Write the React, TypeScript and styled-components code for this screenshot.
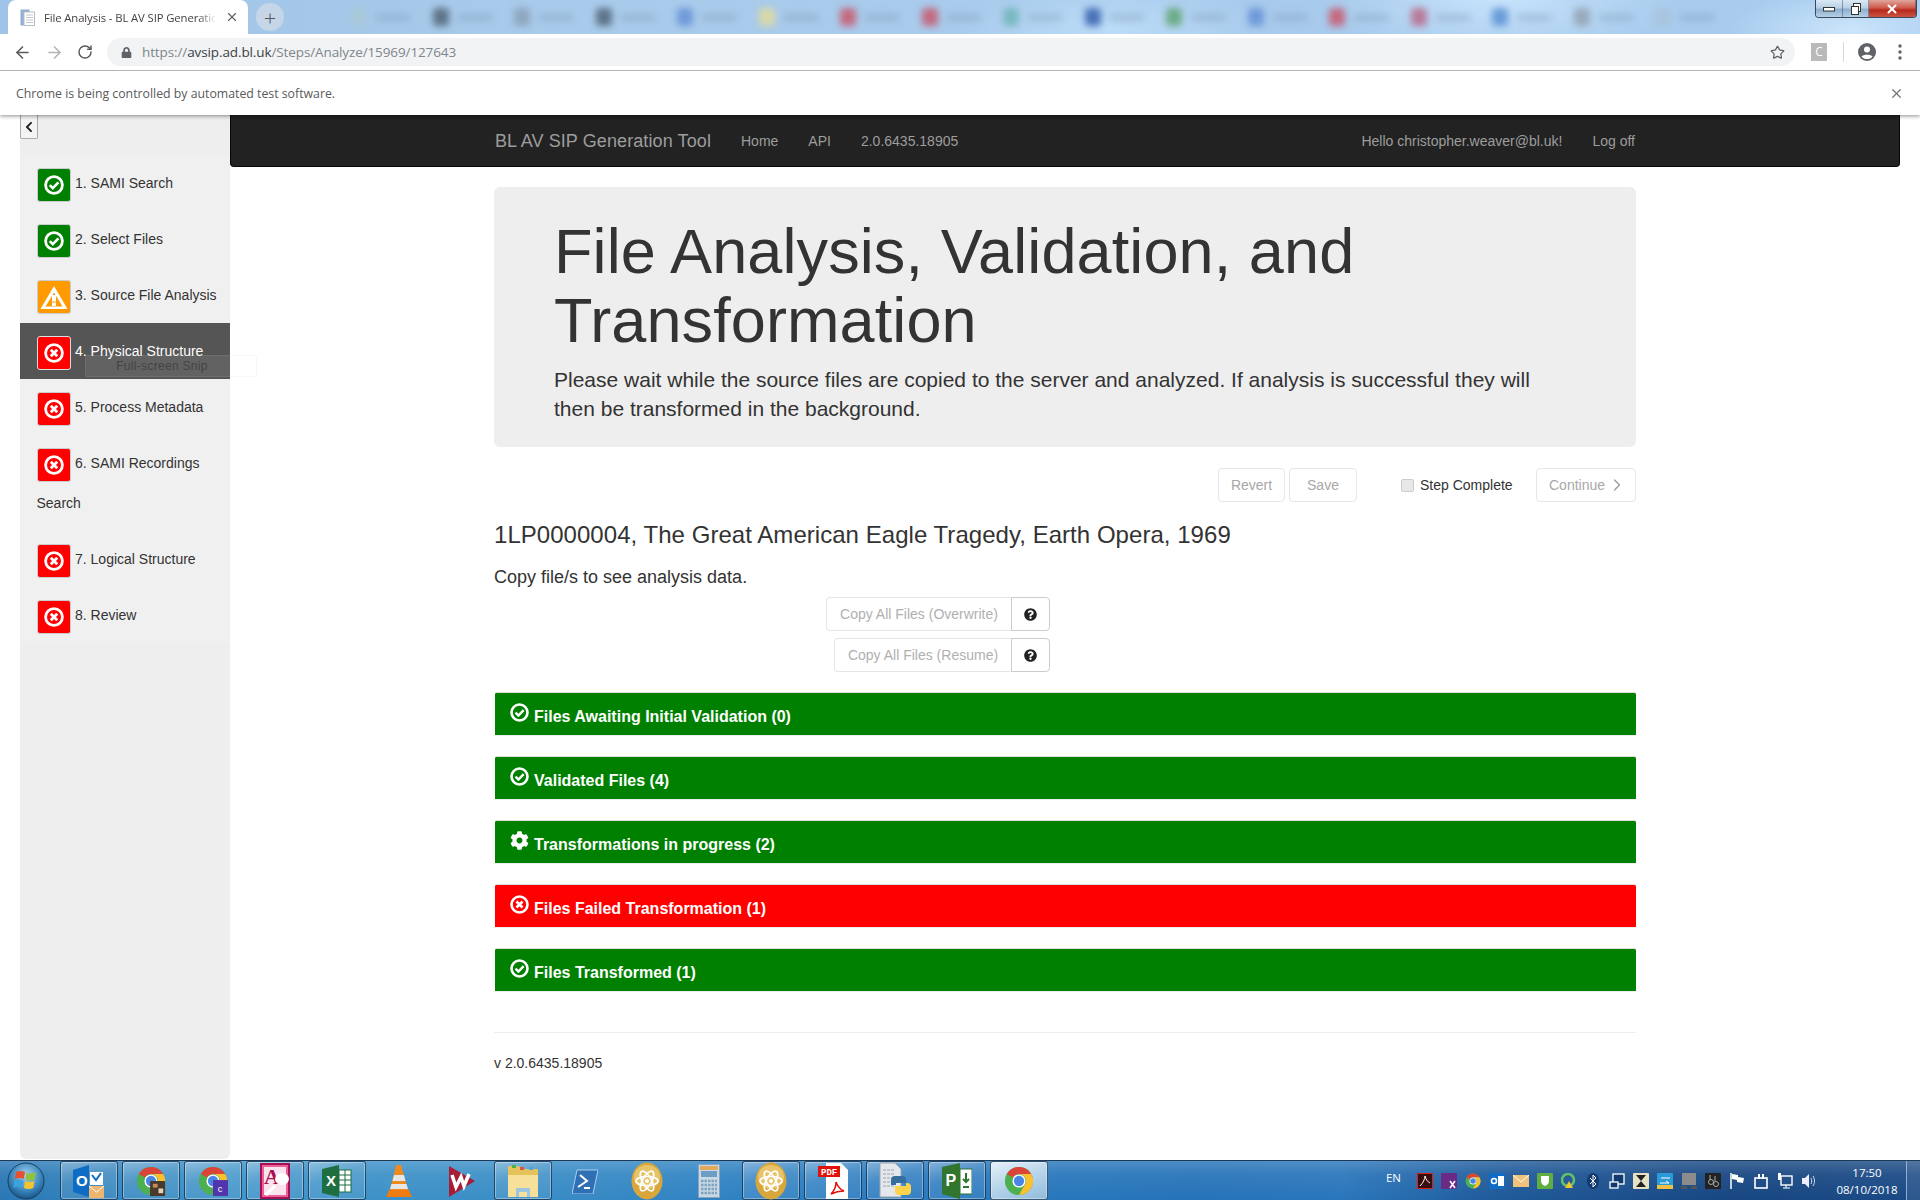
import React from 'react';
import styled, { createGlobalStyle } from 'styled-components';
import { ArrowLeft, ArrowRight, RotateCw, Star, X, ChevronRight } from 'lucide-react';
import { FaChevronLeft, FaCog, FaLock, FaQuestionCircle } from 'react-icons/fa';

const GlobalStyle = createGlobalStyle`
  html, body { margin: 0; padding: 0; background: #fff; }
  body {
    font-family: "Liberation Sans", Arial, sans-serif;
    font-size: 14px;
    color: #333;
    overflow: hidden;
  }
  * { box-sizing: border-box; }
`;

const Screen = styled.div`
  width: 1920px;
  height: 1200px;
  display: flex;
  flex-direction: column;
  overflow: hidden;
`;

/* ---------- browser chrome ---------- */

const ChromeFrame = styled.header`
  height: 115px;
  flex-shrink: 0;
  position: relative;
  z-index: 2;
  background: #fff;
  box-shadow: 0 1px 4px rgba(0, 0, 0, 0.45);
  font-family: "Open Sans", "Noto Sans", sans-serif;
`;

const TabStrip = styled.div`
  height: 34px;
  padding-left: 8px;
  display: flex;
  background:
    radial-gradient(ellipse 180px 60px at 1500px 0, #c6e2fb 0, rgba(198, 226, 251, 0) 100%),
    radial-gradient(ellipse 160px 50px at 1110px 30px, #bcdcf8 0, rgba(188, 220, 248, 0) 100%),
    radial-gradient(ellipse 120px 40px at 1850px 30px, #cbe5fb 0, rgba(203, 229, 251, 0) 100%),
    linear-gradient(90deg, #9fc4e8 0, #a9cbeb 30%, #a8caec 70%, #a9cdef 100%);
`;

const ActiveTab = styled.div`
  width: 240px;
  height: 34px;
  background: #fff;
  border-radius: 8px 8px 0 0;
  display: flex;
  align-items: center;
  padding: 0 8px 0 12px;
  color: #45413f;
  flex-shrink: 0;
`;

const TabTitle = styled.span`
  margin: 0 9px;
  width: 172px;
  white-space: nowrap;
  overflow: hidden;
  font-size: 11.3px;
  letter-spacing: -0.1px;
  mask-image: linear-gradient(90deg, #000 90%, transparent 100%);
`;

const NewTabButton = styled.div`
  width: 28px;
  height: 28px;
  margin: 3px 0 0 8px;
  border-radius: 50%;
  background: #c4d6e8;
  color: #555;
  display: flex;
  align-items: center;
  justify-content: center;
  font-size: 22px;
  font-weight: 300;
  flex-shrink: 0;
`;

const BlurredTabs = styled.div`
  display: flex;
  padding-left: 59px;
  height: 34px;
  filter: blur(3.5px);
  flex: 1;
  min-width: 0;
`;

const BlurredTab = styled.div`
  width: 81.5px;
  flex-shrink: 0;
  display: flex;
  align-items: center;
  padding-left: 8px;
  gap: 9px;
`;

const BlurredIcon = styled.span<{ $color: string }>`
  width: 16px;
  height: 18px;
  border-radius: 4px;
  background: ${(p) => p.$color};
`;

const BlurredLabel = styled.span`
  width: 34px;
  height: 7px;
  background: rgba(120, 145, 175, 0.35);
`;

const WindowControls = styled.div`
  position: absolute;
  top: 0;
  right: 3px;
  width: 102px;
  height: 18px;
  display: flex;
  border: 1px solid #3a4a5c;
  border-top: none;
  border-radius: 0 0 4px 4px;
  overflow: hidden;
`;

const WindowButton = styled.div<{ $width: number; $close?: boolean }>`
  width: ${(p) => p.$width}px;
  display: flex;
  align-items: center;
  justify-content: center;
  border-right: 1px solid rgba(60, 80, 100, 0.5);
  background: ${(p) =>
    p.$close
      ? 'linear-gradient(180deg, #e0a59b 0, #cf5a4c 45%, #b8291b 60%, #cb5444 100%)'
      : 'linear-gradient(180deg, #dce9f5 0, #b9d0e6 45%, #8fb0cf 55%, #b5d0e8 100%)'};
`;

const Toolbar = styled.div`
  height: 37px;
  display: flex;
  align-items: flex-start;
  padding-top: 4px;
  border-bottom: 1px solid #b4b4b4;
  background: #fff;
`;

const NavIconButton = styled.span<{ $disabled?: boolean; $left: number }>`
  width: 20px;
  height: 28px;
  margin-left: ${(p) => p.$left}px;
  display: flex;
  align-items: center;
  justify-content: center;
  color: ${(p) => (p.$disabled ? '#b4b4b4' : '#5a5a5a')};
  flex-shrink: 0;
`;

const Omnibox = styled.div`
  width: 1688px;
  height: 28px;
  margin-left: 12px;
  border-radius: 14px;
  background: #f1f3f4;
  display: flex;
  align-items: center;
  padding: 0 10px 0 14px;
  font-size: 13.5px;
  color: #80868b;
  flex-shrink: 0;
`;

const Url = styled.span`
  margin-left: 10px;
  flex: 1;
  letter-spacing: -0.11px;
`;

const UrlHost = styled.span`
  color: #3b3f44;
`;

const ExtensionBadge = styled.span`
  width: 16px;
  height: 18px;
  margin: 5px 0 0 16px;
  background: #b9b9b9;
  color: #fff;
  font-size: 12px;
  line-height: 18px;
  text-align: center;
`;

const ToolbarDivider = styled.span`
  width: 1px;
  height: 20px;
  margin: 4px 0 0 16px;
  background: #d8d8d8;
`;

const ToolbarIcon = styled.span<{ $left: number }>`
  margin: 4px 0 0 ${(p) => p.$left}px;
  display: flex;
`;

const InfoBar = styled.div`
  height: 44px;
  display: flex;
  align-items: center;
  justify-content: space-between;
  padding: 0 16px;
  font-size: 12.3px;
  color: #5a5a5a;
`;

/* ---------- page ---------- */

const Page = styled.div`
  height: 1045px;
  display: flex;
  padding-left: 20px;
`;

const Sidebar = styled.aside`
  width: 210px;
  height: 1044px;
  background: #eee;
  border-radius: 0 0 6px 6px;
  flex-shrink: 0;
  position: relative;
`;

const SidebarHead = styled.div`
  height: 40px;
`;

const CollapseButton = styled.button`
  width: 18px;
  height: 24px;
  padding: 0;
  background: #f4f4f4;
  border: 1px solid #aaa;
  border-top: none;
  border-radius: 0 0 2px 2px;
  display: flex;
  align-items: center;
  justify-content: center;
  color: #222;
`;

const StepList = styled.nav`
  background: #f0f0f0;
`;

const StepItem = styled.div<{ $active?: boolean }>`
  padding: 8px 12px 8px 16.5px;
  line-height: 40px;
  font-size: 14px;
  color: ${(p) => (p.$active ? '#fff' : '#333')};
  background: ${(p) => (p.$active ? '#555' : 'transparent')};
`;

const StepBadge = styled.span<{ $status: Status; $active?: boolean }>`
  display: inline-flex;
  align-items: center;
  justify-content: center;
  width: 34px;
  height: 34px;
  margin: 2px 4.5px 0 0;
  border-radius: 3px;
  border: 1px solid ${(p) => (p.$active ? '#ddd' : '#ccc')};
  vertical-align: middle;
  background: ${(p) => statusColors[p.$status]};
`;

const SnipGhost = styled.div`
  position: absolute;
  left: 65px;
  top: 240px;
  width: 172px;
  height: 22px;
  background: rgba(255, 255, 255, 0.08);
  border: 1px solid rgba(200, 200, 200, 0.12);
  border-radius: 2px;
  font-size: 12px;
  line-height: 20px;
  color: #444;
  text-align: center;
  padding-right: 18px;
  letter-spacing: 0.3px;
`;

const Main = styled.main`
  width: 1670px;
  flex-shrink: 0;
  display: flex;
  flex-direction: column;
`;

const NavBar = styled.div`
  height: 52px;
  background: #222;
  border: 1px solid #080808;
  border-top: none;
  border-radius: 0 0 4px 4px;
  flex-shrink: 0;
`;

const NavContainer = styled.div`
  width: 1170px;
  height: 50px;
  margin: 0 auto;
  padding: 2px 0 0 15px;
  display: flex;
  align-items: center;
  color: #9d9d9d;
`;

const Brand = styled.span`
  font-size: 18px;
  letter-spacing: 0.1px;
  margin-right: 30px;
`;

const NavLink = styled.span<{ $gap?: number }>`
  margin-right: ${(p) => p.$gap ?? 30}px;
  font-size: 14px;
  white-space: nowrap;
`;

const NavRight = styled.div`
  margin-left: auto;
  padding-right: 15px;
  display: flex;
`;

const Container = styled.div`
  width: 1142px;
  margin-left: 264px;
`;

const Jumbotron = styled.section`
  margin-top: 20px;
  height: 260px;
  background: #eee;
  border-radius: 6px;
  padding: 30px 60px 0;
`;

const Title = styled.h1`
  margin: 0 0 10px;
  font-size: 63px;
  line-height: 69px;
  font-weight: 400;
  letter-spacing: 0.1px;
  color: #333;
`;

const Lead = styled.p`
  margin: 0;
  font-size: 21px;
  line-height: 29.4px;
  font-weight: 300;
  color: #333;
`;

const ActionRow = styled.div`
  margin-top: 21px;
  height: 34px;
  display: flex;
  justify-content: flex-end;
  align-items: center;
`;

const GhostButton = styled.button<{ $width: number; $left?: number }>`
  width: ${(p) => p.$width}px;
  height: 34px;
  margin-left: ${(p) => p.$left ?? 0}px;
  padding: 0;
  background: #fff;
  border: 1px solid #e6e6e6;
  border-radius: 4px;
  font-family: inherit;
  font-size: 14px;
  color: #a8a8a8;
  display: flex;
  align-items: center;
  justify-content: center;
`;

const ContinueButton = styled(GhostButton)`
  justify-content: flex-start;
  padding-left: 12px;
  gap: 2px;
`;

const StepCheck = styled.label`
  margin-left: 44px;
  width: 135px;
  display: flex;
  align-items: center;
  gap: 6px;
  color: #333;
`;

const CheckBox = styled.span`
  width: 13px;
  height: 13px;
  border: 1px solid #ccc;
  border-radius: 2px;
  background: #e8e8e8;
`;

const RecordTitle = styled.h3`
  margin: 20px 0 0;
  font-size: 24px;
  line-height: 26px;
  font-weight: 400;
  letter-spacing: 0.04px;
  color: #333;
`;

const CopyHint = styled.p`
  margin: 16px 0 0;
  font-size: 18px;
  line-height: 26px;
  color: #333;
`;

const CopyColumn = styled.div`
  width: 556px;
  margin-top: 7px;
  display: flex;
  flex-direction: column;
  align-items: flex-end;
  gap: 7px;
`;

const CopyGroup = styled.div`
  display: flex;
  height: 34px;
`;

const CopyButton = styled.button<{ $width: number }>`
  width: ${(p) => p.$width}px;
  padding: 0;
  background: #fff;
  border: 1px solid #e6e6e6;
  border-right: none;
  border-radius: 4px 0 0 4px;
  font-family: inherit;
  font-size: 14px;
  color: #b0b0b0;
`;

const HelpButton = styled.button`
  width: 39px;
  padding: 0;
  background: #fff;
  border: 1px solid #ccc;
  border-radius: 0 4px 4px 0;
  color: #222;
  display: flex;
  align-items: center;
  justify-content: center;
`;

const PanelList = styled.div`
  margin: 20px 0 0 1px;
  display: flex;
  flex-direction: column;
  gap: 21px;
`;

const Panel = styled.div<{ $tone: 'ok' | 'bad' }>`
  height: 43px;
  padding: 0 15px;
  display: flex;
  align-items: center;
  gap: 5px;
  background: ${(p) => (p.$tone === 'ok' ? '#008000' : '#f00')};
  border-top: 1px solid #ddd;
  border-radius: 2px 2px 0 0;
  box-shadow: 0 1px 1px rgba(0, 0, 0, 0.08);
  color: #fff;
  font-size: 16px;
  font-weight: 700;
`;

const PanelGlyph = styled.span`
  display: flex;
  margin-top: -3px;
`;

const PanelLabel = styled.span`
  margin-top: 5px;
`;

const Rule = styled.hr`
  margin: 41px 0 0;
  border: none;
  border-top: 1px solid #eee;
`;

const Footer = styled.footer`
  margin-top: 20px;
  font-size: 14px;
  line-height: 20px;
  color: #333;
`;

/* ---------- taskbar ---------- */

const Taskbar = styled.footer`
  height: 40px;
  flex-shrink: 0;
  position: relative;
  display: flex;
  border-top: 1px solid #1c3a56;
  background:
    linear-gradient(180deg, rgba(255, 255, 255, 0.18) 0, rgba(255, 255, 255, 0.06) 35%, rgba(0, 0, 0, 0) 100%),
    linear-gradient(90deg, #2a77b4 0, #3f94c9 12%, #3b8fc6 25%, #2a7bc0 45%, #2673b8 62%, #2a76bb 70%, #1f5a9a 78%, #174681 90%, #1a4a85 100%);
  color: #fff;
  font-family: "Open Sans", sans-serif;
`;

const StartOrb = styled.div`
  width: 60px;
  display: flex;
  align-items: center;
  padding-left: 7px;
  flex-shrink: 0;
`;

const TaskSlots = styled.div`
  display: flex;
  gap: 4px;
`;

const TaskSlot = styled.div<{ $kind: 'idle' | 'open' | 'active' }>`
  width: 58px;
  height: 39px;
  display: flex;
  align-items: center;
  justify-content: center;
  border-radius: 3px;
  border: ${(p) => (p.$kind === 'idle' ? '1px solid transparent' : '1px solid rgba(12, 40, 70, 0.75)')};
  box-shadow: ${(p) => (p.$kind === 'idle' ? 'none' : 'inset 0 0 0 1px rgba(255, 255, 255, 0.35)')};
  background: ${(p) =>
    p.$kind === 'active'
      ? 'linear-gradient(160deg, #e6f1fa 0, #b6d4ea 50%, #8fbbdc 100%)'
      : p.$kind === 'open'
        ? 'linear-gradient(160deg, rgba(255,255,255,.3) 0, rgba(255,255,255,.1) 40%, rgba(255,255,255,.06) 100%)'
        : 'transparent'};
`;

const Tray = styled.div`
  margin-left: auto;
  display: flex;
  align-items: center;
  padding-right: 14px;
`;

const TrayLang = styled.span`
  font-size: 11.5px;
  margin-right: 12px;
  margin-top: -7px;
`;

const TrayIcons = styled.div`
  display: flex;
  align-items: center;
`;

const TraySlot = styled.span`
  width: 24px;
  display: flex;
  justify-content: center;
`;

const Clock = styled.div`
  width: 78px;
  margin-left: 7px;
  text-align: center;
  font-size: 11.5px;
  line-height: 17px;
`;

const ShowDesktop = styled.div`
  position: absolute;
  right: 0;
  top: 0;
  bottom: 0;
  width: 14px;
  border-left: 1px solid rgba(180, 210, 235, 0.7);
  background: rgba(255, 255, 255, 0.08);
`;

/* ---------- drawings ---------- */

type Status = 'ok' | 'warn' | 'bad';

const statusColors: Record<Status, string> = {
  ok: '#008000',
  warn: '#ff9b00',
  bad: '#f00',
};

const OkCircle = ({ size = 20 }: { size?: number }) => (
  <svg width={size} height={size} viewBox="0 0 20 20">
    <circle cx="10" cy="10" r="8.4" fill="none" stroke="#fff" strokeWidth="2.8" />
    <path d="M5.8 10.2l3 3 5.6-5.8" fill="none" stroke="#fff" strokeWidth="2.6" />
  </svg>
);

const BadCircle = ({ size = 20 }: { size?: number }) => (
  <svg width={size} height={size} viewBox="0 0 20 20">
    <circle cx="10" cy="10" r="8.4" fill="none" stroke="#fff" strokeWidth="2.8" />
    <path d="M6.8 6.8l6.4 6.4M13.2 6.8l-6.4 6.4" fill="none" stroke="#fff" strokeWidth="2.8" />
  </svg>
);

const WarnTriangle = () => (
  <svg width="28" height="25" viewBox="0 0 28 25">
    <path d="M14 1L27.5 24H.5z" fill="#fff" />
    <path d="M14 7.5L22.5 21.5H5.5z" fill="#ff9b00" />
    <rect x="12" y="10" width="4" height="6.5" fill="#fff" />
    <rect x="12" y="17.5" width="4" height="3.5" fill="#fff" />
  </svg>
);

const FileFavicon = () => (
  <svg width="15" height="17" viewBox="0 0 15 17">
    <rect x="0.5" y="0.5" width="9" height="16" fill="#8fb0d6" />
    <rect x="4" y="3" width="10.5" height="13.5" fill="#fff" stroke="#b7bcc4" />
    <path d="M6 6h7M6 8.5h7M6 11h7M6 13.5h7" stroke="#c2c6cc" />
  </svg>
);

const AccountIcon = () => (
  <svg width="20" height="20" viewBox="0 0 20 20">
    <circle cx="10" cy="10" r="9" fill="#5f6368" />
    <circle cx="10" cy="7.5" r="3" fill="#fff" />
    <path d="M4.5 14.5c1.5-2.4 9.5-2.4 11 0-1.4 1.8-3.2 2.6-5.5 2.6s-4.1-.8-5.5-2.6z" fill="#fff" />
  </svg>
);

const DotsIcon = () => (
  <svg width="6" height="20" viewBox="0 0 6 20">
    <circle cx="3" cy="4" r="1.7" fill="#5f6368" />
    <circle cx="3" cy="10" r="1.7" fill="#5f6368" />
    <circle cx="3" cy="16" r="1.7" fill="#5f6368" />
  </svg>
);

const WinOrb = () => (
  <svg width="38" height="38" viewBox="0 0 38 38">
    <defs>
      <radialGradient id="orb" cx="50%" cy="35%" r="70%">
        <stop offset="0" stopColor="#a8d4f0" />
        <stop offset="0.6" stopColor="#3a86bd" />
        <stop offset="1" stopColor="#134a78" />
      </radialGradient>
    </defs>
    <circle cx="19" cy="19" r="18" fill="url(#orb)" stroke="#1c3e5c" />
    <path d="M9 10c3-1.5 6-1.500 9 0l-1.200 7c-3-1.400-6-1.400-9 0z" fill="#e8512f" />
    <path d="M19.500 10.500c3 1.300 6 1.300 9.500-.2l-1.200 7.200c-3.300 1.400-6.300 1.400-9.300.1z" fill="#8fc33f" />
    <path d="M7.500 18.500c3-1.300 6-1.300 9 0l-1.200 7.200c-3-1.400-6-1.400-9 0z" fill="#3aa3dc" />
    <path d="M18 19c3 1.300 6 1.300 9.500-.1l-1.200 7.100c-3.300 1.500-6.300 1.400-9.300.1z" fill="#f4c430" />
  </svg>
);

const ChromeLogo = ({ size = 30, badge }: { size?: number; badge?: React.ReactNode }) => (
  <svg width={size} height={size} viewBox="0 0 32 32">
    <circle cx="16" cy="16" r="15" fill="#4caf50" />
    <path d="M16 1a15 15 0 0 1 13 7.500H16a7.500 7.500 0 0 0-6.500 3.750L3 8.500A15 15 0 0 1 16 1z" fill="#db4437" />
    <path d="M29 8.500A15 15 0 0 1 16 31l6.500-11.250A7.500 7.500 0 0 0 22.500 12.250 7.500 7.500 0 0 0 16 8.500z" fill="#fbc02d" />
    <circle cx="16" cy="16" r="7" fill="#fff" />
    <circle cx="16" cy="16" r="5.500" fill="#4a86e8" />
    {badge}
  </svg>
);

const AtomLogo = () => (
  <svg width="32" height="38" viewBox="0 0 32 38">
    <ellipse cx="16" cy="19" rx="15.500" ry="18.500" fill="#d9a63c" />
    <ellipse cx="16" cy="15" rx="13" ry="12" fill="#ecd27e" opacity="0.7" />
    <g fill="none" stroke="#fff" strokeWidth="1.700">
      <ellipse cx="16" cy="19" rx="11" ry="4.500" />
      <ellipse cx="16" cy="19" rx="11" ry="4.500" transform="rotate(60 16 19)" />
      <ellipse cx="16" cy="19" rx="11" ry="4.500" transform="rotate(120 16 19)" />
    </g>
    <circle cx="16" cy="19" r="2" fill="#fff" />
  </svg>
);

const taskIcons: { kind: 'idle' | 'open' | 'active'; icon: React.ReactNode }[] = [
  {
    kind: 'open',
    icon: (
      <svg width="34" height="34" viewBox="0 0 34 34">
        <path d="M1 6l16-5v32L1 28z" fill="#0f6cc4" />
        <text x="4" y="22" fontSize="15" fontWeight="700" fill="#fff" fontFamily="Liberation Sans">O</text>
        <rect x="18" y="8" width="13" height="13" fill="#fff" />
        <path d="M20 11l4 5 5-7" fill="none" stroke="#0f6cc4" strokeWidth="2" />
        <rect x="17" y="22" width="15" height="12" fill="#eeb56f" />
        <path d="M17 22l7.500 6 7.500-6" fill="none" stroke="#fff" />
      </svg>
    ),
  },
  {
    kind: 'open',
    icon: (
      <ChromeLogo
        badge={
          <g>
            <rect x="15" y="16" width="16" height="16" fill="#4a3a2c" />
            <rect x="18" y="19" width="5" height="4" fill="#c98b5a" />
            <rect x="24" y="24" width="5" height="5" fill="#e4d2b8" />
          </g>
        }
      />
    ),
  },
  {
    kind: 'open',
    icon: (
      <ChromeLogo
        badge={
          <g>
            <rect x="16" y="15" width="16" height="17" fill="#5135ac" />
            <text x="21" y="28" fontSize="10" fill="#fff" fontFamily="Liberation Sans">c</text>
          </g>
        }
      />
    ),
  },
  {
    kind: 'open',
    icon: (
      <svg width="30" height="36" viewBox="0 0 30 36">
        <rect x="1" y="1" width="28" height="34" fill="#ec5f98" stroke="#a80f52" strokeWidth="2" />
        <rect x="4" y="4" width="22" height="28" fill="#f9e3ec" />
        <text x="4" y="21" fontSize="22" fontWeight="700" fill="#a80f52" fontFamily="Liberation Serif">A</text>
        <ellipse cx="22" cy="16" rx="7" ry="6" fill="#fff" />
        <path d="M4 31l10-9 2 2-9 9z" fill="#fff" />
      </svg>
    ),
  },
  {
    kind: 'open',
    icon: (
      <svg width="30" height="32" viewBox="0 0 30 32">
        <path d="M0 4l17-4v32L0 28z" fill="#1d6f42" />
        <text x="4" y="21" fontSize="15" fontWeight="700" fill="#fff" fontFamily="Liberation Sans">X</text>
        <rect x="17" y="5" width="12" height="22" fill="#fff" stroke="#1d6f42" />
        <path d="M17 10h12M17 15h12M17 20h12M23 5v22" stroke="#1d6f42" />
      </svg>
    ),
  },
  {
    kind: 'idle',
    icon: (
      <svg width="28" height="34" viewBox="0 0 28 34">
        <path d="M11 1h5l7 25H5z" fill="#f08a1c" />
        <path d="M9 11h10l1.500 6h-13zM6.500 20h15l1.500 5H5z" fill="#e6e6e6" />
        <path d="M4 26h20l3 7H1z" fill="#ee7c10" />
      </svg>
    ),
  },
  {
    kind: 'idle',
    icon: (
      <svg width="28" height="36" viewBox="0 0 28 36">
        <path d="M2 3l26 15L2 34z" fill="#a81c36" />
        <path d="M5 12l4 12 5-10 3 9 5-12" fill="none" stroke="#fff" strokeWidth="3.500" />
      </svg>
    ),
  },
  {
    kind: 'open',
    icon: (
      <svg width="32" height="34" viewBox="0 0 32 34">
        <path d="M1 2h11l2 3h17v6H1z" fill="#e6c25a" />
        <rect x="5" y="1" width="4" height="3" fill="#4caf50" />
        <rect x="13" y="3" width="4" height="3" fill="#d9534f" />
        <rect x="22" y="3" width="4" height="3" fill="#4aa3df" />
        <path d="M1 11h30v22H1z" fill="#f7e09a" />
        <path d="M9 33v-9h14v9h-3v-5h-8v5z" fill="#9cc6e0" />
      </svg>
    ),
  },
  {
    kind: 'idle',
    icon: (
      <svg width="26" height="26" viewBox="0 0 26 26">
        <path d="M5 2h21l-5 24H0z" fill="#2f6fb3" stroke="#a9d0ec" />
        <path d="M8 7l7 6-9 6M12 20h6" fill="none" stroke="#fff" strokeWidth="2" />
      </svg>
    ),
  },
  { kind: 'idle', icon: <AtomLogo /> },
  {
    kind: 'idle',
    icon: (
      <svg width="22" height="34" viewBox="0 0 22 34">
        <rect x="0.500" y="0.500" width="21" height="33" fill="#c8d8e6" stroke="#8aa3b8" />
        <rect x="2" y="2" width="18" height="4" fill="#e2a95a" />
        <rect x="3" y="7" width="16" height="6" fill="#6e9cc4" />
        <path d="M3 17h16M3 21h16M3 25h16M3 29h16" stroke="#7ea2bf" strokeWidth="2.500" strokeDasharray="2.500 1" />
      </svg>
    ),
  },
  { kind: 'open', icon: <AtomLogo /> },
  {
    kind: 'open',
    icon: (
      <svg width="30" height="36" viewBox="0 0 30 36">
        <path d="M8 0h15l7 7v29H8z" fill="#fff" />
        <rect x="0" y="3" width="22" height="11" fill="#e2120b" />
        <text x="3" y="12" fontSize="9" fontWeight="700" fill="#fff" fontFamily="Liberation Mono">PDF</text>
        <path d="M13 31c3-3 5-8 5-12 2 5 5 8 8 9-4 0-9 1-13 3z" fill="none" stroke="#e2120b" strokeWidth="1.500" />
      </svg>
    ),
  },
  {
    kind: 'open',
    icon: (
      <svg width="32" height="38" viewBox="0 0 32 38">
        <path d="M1 1h15l6 6v28H1z" fill="#e4e8ec" stroke="#9aa4ae" />
        <path d="M4 8h12M4 12h12M4 16h12M4 20h12M4 24h12" stroke="#9aa4ae" strokeDasharray="3 1" />
        <path d="M16 14h7a4 4 0 0 1 4 4v3H17v2h-5v-5a4 4 0 0 1 4-4z" fill="#356fa0" />
        <path d="M27 21h1a4 4 0 0 1 4 4v4a4 4 0 0 1-4 4h-8a4 4 0 0 1-4-4v-5h11z" fill="#fcd34a" />
      </svg>
    ),
  },
  {
    kind: 'open',
    icon: (
      <svg width="30" height="36" viewBox="0 0 30 36">
        <path d="M0 4l18-4v36L0 31z" fill="#31752f" />
        <text x="3.500" y="23" fontSize="16" fontWeight="700" fill="#fff" fontFamily="Liberation Sans">P</text>
        <rect x="18" y="6" width="12" height="25" fill="#fff" stroke="#31752f" />
        <path d="M24 10v9M21 16l3 3 3-3M21 24h6" fill="none" stroke="#31752f" strokeWidth="2" />
      </svg>
    ),
  },
  { kind: 'active', icon: <ChromeLogo size={30} /> },
];

const Tile = ({ bg, children }: { bg: string; children?: React.ReactNode }) => (
  <svg width="16" height="16" viewBox="0 0 16 16">
    <rect width="16" height="16" rx="1" fill={bg} />
    {children}
  </svg>
);

const trayIcons: React.ReactNode[] = [
  <Tile key="a" bg="#3a0d0d"><rect x="0.500" y="0.500" width="15" height="15" fill="none" stroke="#d81e1e" /><path d="M3 13c3-3 5-7 5-10 1 4 3 6 5 7" fill="none" stroke="#fff" /></Tile>,
  <Tile key="b" bg="#6c2a87"><path d="M9 8l5 7M14 8l-5 7" stroke="#fff" strokeWidth="1.500" /></Tile>,
  <ChromeLogo key="c" size={16} />,
  <Tile key="d" bg="#0f6cc4"><rect x="9" y="3" width="6" height="10" fill="#fff" /><circle cx="5" cy="8" r="2.500" fill="none" stroke="#fff" strokeWidth="1.500" /></Tile>,
  <svg key="e" width="16" height="12" viewBox="0 0 16 12"><rect width="16" height="12" fill="#f0c27b" /><path d="M0 0l8 7 8-7" fill="none" stroke="#fff" /></svg>,
  <Tile key="f" bg="#5fae42"><path d="M4 3h8v5c0 3-2 4-4 5-2-1-4-2-4-5z" fill="#fff" /></Tile>,
  <svg key="g" width="16" height="16" viewBox="0 0 16 16"><circle cx="7" cy="7" r="6" fill="none" stroke="#62c26a" strokeWidth="2.500" /><path d="M8 8l4 7H4z" fill="#f4c430" /></svg>,
  <svg key="h" width="12" height="16" viewBox="0 0 12 16"><ellipse cx="6" cy="8" rx="6" ry="8" fill="#123a70" /><path d="M3 5l6 6-3 3V2l3 3-6 6" fill="none" stroke="#fff" /></svg>,
  <svg key="i" width="16" height="16" viewBox="0 0 16 16"><rect x="4" y="1" width="11" height="10" fill="#123a70" stroke="#fff" strokeWidth="1.300" /><rect x="1" y="9" width="8" height="6" fill="#123a70" stroke="#fff" strokeWidth="1.300" /></svg>,
  <Tile key="j" bg="#e7e2c4"><path d="M3 2h10L3 14h10z" fill="#222" /></Tile>,
  <Tile key="k" bg="#2a9bd8"><path d="M3 10h9l-3-2M13 5H4" stroke="#fff" fill="none" /><rect y="12" width="16" height="4" fill="#f0c040" /></Tile>,
  <svg key="l" width="16" height="16" viewBox="0 0 16 16"><rect x="1" y="0" width="14" height="12" fill="#8c8c8c" /><rect y="13" width="6" height="3" fill="#555" /><rect x="10" y="13" width="6" height="3" fill="#555" /></svg>,
  <Tile key="m" bg="#222"><circle cx="6" cy="9" r="2.500" fill="none" stroke="#aaa" /><circle cx="11" cy="11" r="2.500" fill="none" stroke="#aaa" /><path d="M5 2v5M10 3v5" stroke="#aaa" /></Tile>,
  <svg key="n" width="16" height="16" viewBox="0 0 16 16"><path d="M2 0v16" stroke="#fff" strokeWidth="1.500" /><path d="M3 1l6 1v2l6 1-1 5-6-1V7L3 6z" fill="#fff" /></svg>,
  <svg key="o" width="16" height="16" viewBox="0 0 16 16"><rect x="2" y="5" width="12" height="10" fill="none" stroke="#fff" strokeWidth="1.600" /><rect x="5" y="1" width="2" height="5" fill="#fff" /><rect x="9" y="1" width="2" height="5" fill="#fff" /></svg>,
  <svg key="p" width="16" height="16" viewBox="0 0 16 16"><rect x="4" y="3" width="11" height="9" fill="none" stroke="#fff" strokeWidth="1.400" /><rect x="1" y="0" width="3" height="7" fill="#fff" /><path d="M9 12v3M6 15h7" stroke="#fff" /></svg>,
  <svg key="q" width="16" height="16" viewBox="0 0 16 16"><path d="M1 5h3l4-4v14l-4-4H1z" fill="#eef" /><path d="M10 5c1 2 1 4 0 6M12 3c2 3 2 7 0 10" fill="none" stroke="#cfe0f0" /></svg>,
];

const blurredTabColors = [
  '#a9c8d8',
  '#5e7488',
  '#8fa7c0',
  '#5e7488',
  '#6f9ad8',
  '#d9d9a8',
  '#c46a80',
  '#c46a80',
  '#7ab8c0',
  '#4a72b8',
  '#6cac88',
  '#6f9ad8',
  '#c46a80',
  '#b87a98',
  '#6a9cd8',
  '#98a9ba',
  '#a9c4dc',
];

type Step = { label: string; status: Status; active?: boolean };

const steps: Step[] = [
  { label: '1. SAMI Search', status: 'ok' },
  { label: '2. Select Files', status: 'ok' },
  { label: '3. Source File Analysis', status: 'warn' },
  { label: '4. Physical Structure', status: 'bad', active: true },
  { label: '5. Process Metadata', status: 'bad' },
  { label: '6. SAMI Recordings Search', status: 'bad' },
  { label: '7. Logical Structure', status: 'bad' },
  { label: '8. Review', status: 'bad' },
];

type PanelRow = { label: string; tone: 'ok' | 'bad'; icon: React.ReactNode };

const panels: PanelRow[] = [
  { label: 'Files Awaiting Initial Validation (0)', tone: 'ok', icon: <OkCircle size={19} /> },
  { label: 'Validated Files (4)', tone: 'ok', icon: <OkCircle size={19} /> },
  { label: 'Transformations in progress (2)', tone: 'ok', icon: <FaCog size={19} /> },
  { label: 'Files Failed Transformation (1)', tone: 'bad', icon: <BadCircle size={19} /> },
  { label: 'Files Transformed (1)', tone: 'ok', icon: <OkCircle size={19} /> },
];

const stepGlyph = (status: Status) => {
  if (status === 'ok') return <OkCircle />;
  if (status === 'warn') return <WarnTriangle />;
  return <BadCircle />;
};

export default function App() {
  return (
    <Screen>
      <GlobalStyle />
      <ChromeFrame>
        <TabStrip>
          <ActiveTab>
            <FileFavicon />
            <TabTitle>File Analysis - BL AV SIP Generation Tool</TabTitle>
            <X size={14} strokeWidth={2} color="#5f6368" />
          </ActiveTab>
          <NewTabButton>+</NewTabButton>
          <BlurredTabs>
            {blurredTabColors.map((color, i) => (
              <BlurredTab key={i}>
                <BlurredIcon $color={color} />
                <BlurredLabel />
              </BlurredTab>
            ))}
          </BlurredTabs>
        </TabStrip>
        <WindowControls>
          <WindowButton $width={28}>
            <svg width="12" height="6" viewBox="0 0 12 6"><rect x="0.500" y="1.500" width="11" height="3.500" fill="#fff" stroke="#333" /></svg>
          </WindowButton>
          <WindowButton $width={26}>
            <svg width="12" height="12" viewBox="0 0 12 12"><rect x="3.500" y="0.500" width="7" height="8" fill="#fff" stroke="#333" /><rect x="1.500" y="3.500" width="7" height="8" fill="#fff" stroke="#333" /></svg>
          </WindowButton>
          <WindowButton $width={48} $close>
            <X size={14} strokeWidth={3.500} color="#fff" />
          </WindowButton>
        </WindowControls>
        <Toolbar>
          <NavIconButton $left={12}><ArrowLeft size={19} strokeWidth={2} /></NavIconButton>
          <NavIconButton $left={12} $disabled><ArrowRight size={19} strokeWidth={2} /></NavIconButton>
          <NavIconButton $left={11}><RotateCw size={16} strokeWidth={2.200} /></NavIconButton>
          <Omnibox>
            <FaLock size={11} color="#5f6368" />
            <Url>
              https://<UrlHost>avsip.ad.bl.uk</UrlHost>/Steps/Analyze/15969/127643
            </Url>
            <Star size={15} color="#5f6368" strokeWidth={2} />
          </Omnibox>
          <ExtensionBadge>C</ExtensionBadge>
          <ToolbarDivider />
          <ToolbarIcon $left={13}><AccountIcon /></ToolbarIcon>
          <ToolbarIcon $left={20}><DotsIcon /></ToolbarIcon>
        </Toolbar>
        <InfoBar>
          <span>Chrome is being controlled by automated test software.</span>
          <X size={15} color="#777" strokeWidth={2} />
        </InfoBar>
      </ChromeFrame>

      <Page>
        <Sidebar>
          <SidebarHead>
            <CollapseButton>
              <FaChevronLeft size={12} />
            </CollapseButton>
          </SidebarHead>
          <StepList>
            {steps.map((step) => (
              <StepItem key={step.label} $active={step.active}>
                <StepBadge $status={step.status} $active={step.active}>
                  {stepGlyph(step.status)}
                </StepBadge>
                {step.label}
              </StepItem>
            ))}
          </StepList>
          <SnipGhost>Full-screen Snip</SnipGhost>
        </Sidebar>

        <Main>
          <NavBar>
            <NavContainer>
              <Brand>BL AV SIP Generation Tool</Brand>
              <NavLink>Home</NavLink>
              <NavLink>API</NavLink>
              <NavLink>2.0.6435.18905</NavLink>
              <NavRight>
                <NavLink>Hello christopher.weaver@bl.uk!</NavLink>
                <NavLink $gap={0}>Log off</NavLink>
              </NavRight>
            </NavContainer>
          </NavBar>

          <Container>
            <Jumbotron>
              <Title>File Analysis, Validation, and Transformation</Title>
              <Lead>
                Please wait while the source files are copied to the server and analyzed. If analysis is successful they
                will then be transformed in the background.
              </Lead>
            </Jumbotron>

            <ActionRow>
              <GhostButton $width={67}>Revert</GhostButton>
              <GhostButton $width={68} $left={4}>Save</GhostButton>
              <StepCheck>
                <CheckBox />
                Step Complete
              </StepCheck>
              <ContinueButton $width={100}>
                Continue <ChevronRight size={20} color="#999" strokeWidth={1.500} />
              </ContinueButton>
            </ActionRow>

            <RecordTitle>1LP0000004, The Great American Eagle Tragedy, Earth Opera, 1969</RecordTitle>
            <CopyHint>Copy file/s to see analysis data.</CopyHint>

            <CopyColumn>
              <CopyGroup>
                <CopyButton $width={185}>Copy All Files (Overwrite)</CopyButton>
                <HelpButton><FaQuestionCircle size={13} /></HelpButton>
              </CopyGroup>
              <CopyGroup>
                <CopyButton $width={177}>Copy All Files (Resume)</CopyButton>
                <HelpButton><FaQuestionCircle size={13} /></HelpButton>
              </CopyGroup>
            </CopyColumn>

            <PanelList>
              {panels.map((panel) => (
                <Panel key={panel.label} $tone={panel.tone}>
                  <PanelGlyph>{panel.icon}</PanelGlyph>
                  <PanelLabel>{panel.label}</PanelLabel>
                </Panel>
              ))}
            </PanelList>

            <Rule />
            <Footer>v 2.0.6435.18905</Footer>
          </Container>
        </Main>
      </Page>

      <Taskbar>
        <StartOrb><WinOrb /></StartOrb>
        <TaskSlots>
          {taskIcons.map((task, i) => (
            <TaskSlot key={i} $kind={task.kind}>{task.icon}</TaskSlot>
          ))}
        </TaskSlots>
        <Tray>
          <TrayLang>EN</TrayLang>
          <TrayIcons>
            {trayIcons.map((icon, i) => (
              <TraySlot key={i}>{icon}</TraySlot>
            ))}
          </TrayIcons>
          <Clock>
            17:50
            <br />
            08/10/2018
          </Clock>
        </Tray>
        <ShowDesktop />
      </Taskbar>
    </Screen>
  );
}
